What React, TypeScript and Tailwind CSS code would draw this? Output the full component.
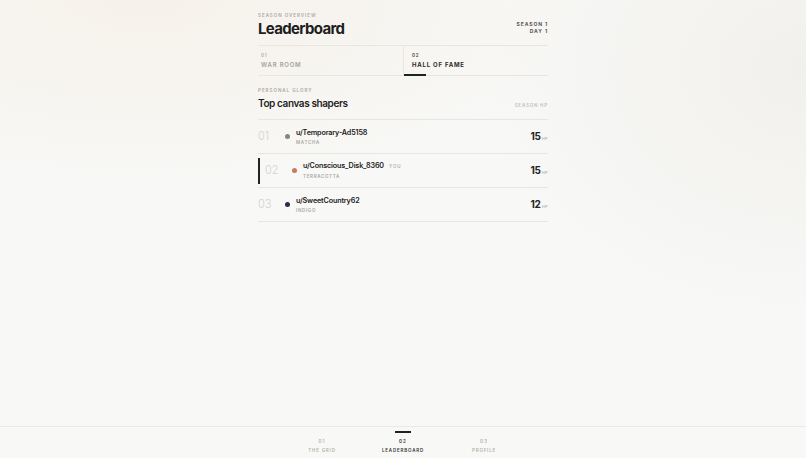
import React from "react";

const players = [
  { rank: "01", name: "u/Temporary-Ad5158", color: "MATCHA", dot: "bg-[#7f8a7c]", hp: 15, you: false },
  { rank: "02", name: "u/Conscious_Disk_8360", color: "TERRACOTTA", dot: "bg-[#c87a5e]", hp: 15, you: true },
  { rank: "03", name: "u/SweetCountry62", color: "INDIGO", dot: "bg-[#263044]", hp: 12, you: false },
];

const nav = [
  { n: "01", label: "THE GRID", active: false },
  { n: "02", label: "LEADERBOARD", active: true },
  { n: "03", label: "PROFILE", active: false },
];

function Row({ p }: { p: (typeof players)[number] }) {
  return (
    <div className="h-[34px] border-b border-[#e8e6e2] flex items-center">
      <div className={`flex items-center flex-1 h-[26px] ${p.you ? "border-l-2 border-[#222] pl-[5px]" : ""}`}>
        <span className="w-[27px] text-[11px] font-light text-[#d3d2cf] leading-none">{p.rank}</span>
        <span className={`w-[5px] h-[5px] rounded-full ${p.dot}`} />
        <div className="ml-[6px] flex flex-col">
          <div className="flex items-baseline">
            <span className="text-[7.2px] font-semibold text-[#222] tracking-[-0.02em] leading-[9px]">{p.name}</span>
            {p.you && (
              <span className="ml-[5px] text-[4.5px] font-semibold tracking-[0.2em] text-[#b5b3af]">YOU</span>
            )}
          </div>
          <span className="mt-[3px] text-[4.5px] font-semibold tracking-[0.15em] text-[#a9a7a3] leading-[6px]">
            {p.color}
          </span>
        </div>
        <div className="ml-auto flex items-baseline">
          <span className="text-[10px] font-bold text-[#222] tracking-[-0.03em]">{p.hp}</span>
          <span className="ml-[1px] text-[4px] font-semibold tracking-[0.1em] text-[#bbb]">HP</span>
        </div>
      </div>
    </div>
  );
}

export default function App() {
  return (
    <div
      className="relative h-[458px] overflow-hidden bg-[#f8f8f6] bg-[radial-gradient(ellipse_55%_40%_at_18%_0%,#f6f1ea_0%,transparent_100%),radial-gradient(ellipse_40%_55%_at_100%_15%,#f1f0ed_0%,transparent_100%)]"
      style={{ fontFamily: "Inter, 'Noto Sans', sans-serif" }}
    >
      <div className="mx-auto w-[290px] pt-[13px]">
        <header className="flex items-end justify-between pb-[7px] border-b border-[#e8e6e2]">
          <div>
            <p className="text-[4.5px] font-semibold tracking-[0.22em] text-[#a9a7a3] leading-[6px]">SEASON OVERVIEW</p>
            <h1 className="mt-[1px] text-[15px] font-bold tracking-[-0.045em] text-[#1e1e1e] leading-[18px]">Leaderboard</h1>
          </div>
          <div className="text-right pb-[4px]">
            <p className="text-[5px] font-bold tracking-[0.18em] text-[#555] leading-[6.5px]">SEASON 1</p>
            <p className="text-[5px] font-bold tracking-[0.18em] text-[#555] leading-[6.5px]">DAY 1</p>
          </div>
        </header>

        <div className="grid grid-cols-2 h-[30px] border-b border-[#e8e6e2]">
          <div className="pl-[3px] pt-[7px]">
            <p className="text-[4.5px] font-semibold tracking-[0.2em] text-[#b0aeaa] leading-[6px]">01</p>
            <p className="mt-[2px] text-[6px] font-semibold tracking-[0.13em] text-[#a3a19d] leading-[8px]">WAR ROOM</p>
          </div>
          <div className="relative border-l border-[#e8e6e2] pl-[8px] pt-[7px]">
            <p className="text-[4.5px] font-semibold tracking-[0.2em] text-[#444] leading-[6px]">02</p>
            <p className="mt-[2px] text-[6px] font-bold tracking-[0.13em] text-[#2a2a2a] leading-[8px]">HALL OF FAME</p>
            <span className="absolute left-0 -bottom-px w-[22px] h-[2px] bg-[#222]" />
          </div>
        </div>

        <div className="mt-[12px] flex items-end justify-between pb-[10px] border-b border-[#e8e6e2]">
          <div>
            <p className="text-[4.5px] font-semibold tracking-[0.22em] text-[#a9a7a3] leading-[6px]">PERSONAL GLORY</p>
            <h2 className="mt-[3px] text-[10px] font-semibold tracking-[-0.04em] text-[#1e1e1e] leading-[12px]">Top canvas shapers</h2>
          </div>
          <p className="text-[4.5px] font-semibold tracking-[0.18em] text-[#c0beba] leading-[6px]">SEASON HP</p>
        </div>

        {players.map((p) => (
          <Row key={p.rank} p={p} />
        ))}
      </div>

      <nav className="absolute bottom-0 left-0 right-0 h-[32px] border-t border-[#ebe9e5] bg-[#f8f8f6] flex justify-center">
        {nav.map((item) => (
          <div key={item.n} className="relative w-[81px] flex flex-col items-center pt-[12px]">
            {item.active && <span className="absolute top-[4px] w-[16px] h-[2px] bg-[#222]" />}
            <span className={`text-[4.5px] font-semibold tracking-[0.25em] leading-[6px] ${item.active ? "text-[#333]" : "text-[#b3b1ad]"}`}>
              {item.n}
            </span>
            <span className={`mt-[3px] text-[4.5px] font-semibold tracking-[0.18em] leading-[6px] ${item.active ? "text-[#333]" : "text-[#b3b1ad]"}`}>
              {item.label}
            </span>
          </div>
        ))}
      </nav>
    </div>
  );
}
